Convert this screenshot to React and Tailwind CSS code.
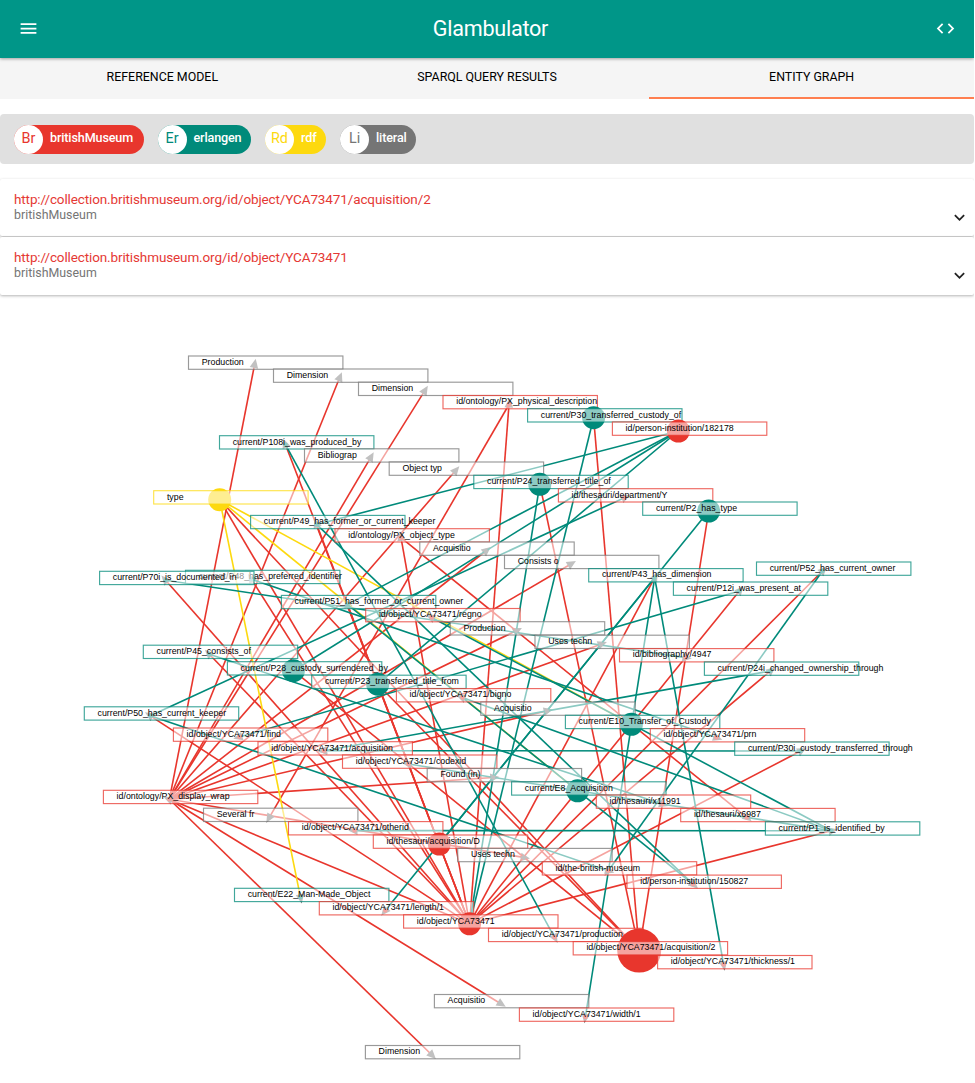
import React, { useState } from 'react';
import { MdMenu, MdCode, MdExpandMore } from 'react-icons/md';

const COLORS = {
  britishMuseum: '#e8362d',
  erlangen: '#008a7a',
  rdf: '#fdd90f',
  literal: '#777777',
};

const TABS = ['Reference model', 'SPARQL query results', 'Entity graph'];

const CHIPS = [
  { short: 'Br', label: 'britishMuseum', bg: 'bg-[#e8362d]', text: 'text-[#e8362d]', width: 'w-[129.5px]' },
  { short: 'Er', label: 'erlangen', bg: 'bg-[#008a7a]', text: 'text-[#008a7a]', width: 'w-[93.5px]' },
  { short: 'Rd', label: 'rdf', bg: 'bg-[#fdd90f]', text: 'text-[#fdd90f]', width: 'w-[61px]' },
  { short: 'Li', label: 'literal', bg: 'bg-[#757575]', text: 'text-[#757575]', width: 'w-[76px]' },
];

const ENTITIES = [
  { uri: 'http://collection.britishmuseum.org/id/object/YCA73471/acquisition/2', prefix: 'britishMuseum', height: 'h-[57px]' },
  { uri: 'http://collection.britishmuseum.org/id/object/YCA73471', prefix: 'britishMuseum', height: 'h-[58px]' },
];

const B = 'britishMuseum';
const E = 'erlangen';
const R = 'rdf';
const L = 'literal';

// [id, label, group, x, y, radius]: x and y are the corner of the label box
const NODES = [
  ['lProd1', 'Production', L, 188.5, 356],
  ['lDim1', 'Dimension', L, 273.5, 369],
  ['lDim2', 'Dimension', L, 358.5, 382.2],
  ['physDesc', 'id/ontology/PX_physical_description', B, 443, 395.5],
  ['p30', 'current/P30_transferred_custody_of', E, 527.6, 408.7, 11.5],
  ['inst182178', 'id/person-institution/182178', B, 612.4, 422, 11.5],
  ['p108i', 'current/P108i_was_produced_by', E, 219.5, 435.7],
  ['lBib', 'Bibliograp', L, 304.5, 448.8],
  ['lObj', 'Object typ', L, 389.2, 462],
  ['p24', 'current/P24_transferred_title_of', E, 473.8, 475.3, 11.5],
  ['dept', 'id/thesauri/department/Y', B, 558.4, 488.7],
  ['p2', 'current/P2_has_type', E, 642.7, 502, 11.5],
  ['type', 'type', R, 153.7, 490.7, 11.5],
  ['p49', 'current/P49_has_former_or_current_keeper', E, 250.6, 515.4],
  ['objType', 'id/ontology/PX_object_type', B, 335, 528.7],
  ['lAcq1', 'Acquisitio', L, 419.8, 542],
  ['lCons', 'Consists o', L, 504.5, 555.3],
  ['p43', 'current/P43_has_dimension', E, 588.7, 568.6],
  ['p12i', 'current/P12i_was_present_at', E, 673.4, 582],
  ['p48', 'current/P48_has_preferred_identifier', E, 185.5, 570.3],
  ['p70i', 'current/P70i_is_documented_in', E, 99.6, 571.3],
  ['p52', 'current/P52_has_current_owner', E, 756.5, 562],
  ['p51', 'current/P51_has_former_or_current_owner', E, 281.4, 595.4],
  ['regno', 'id/object/YCA73471/regno', B, 365.7, 608.5],
  ['lProd2', 'Production', L, 450.3, 621.7],
  ['lUses1', 'Uses techn', L, 535, 635.2],
  ['bib4947', 'id/bibliography/4947', B, 619.5, 648.6],
  ['p24i', 'current/P24i_changed_ownership_through', E, 704.4, 662],
  ['p45', 'current/P45_consists_of', E, 143.3, 645.2],
  ['p28', 'current/P28_custody_surrendered_by', E, 227.4, 661.7, 11.5],
  ['p23', 'current/P23_transferred_title_from', E, 311.7, 675.2, 11.5],
  ['bigno', 'id/object/YCA73471/bigno', B, 396.4, 688.6],
  ['lAcq2', 'Acquisitio', L, 480.8, 702],
  ['e10', 'current/E10_Transfer_of_Custody', E, 565.4, 715.3, 11.5],
  ['prn', 'id/object/YCA73471/prn', B, 650.3, 728.6],
  ['p30i', 'current/P30i_custody_transferred_through', E, 734.7, 742],
  ['p50', 'current/P50_has_current_keeper', E, 84.3, 706.8],
  ['find', 'id/object/YCA73471/find', B, 173.4, 728],
  ['acquisition', 'id/object/YCA73471/acquisition', B, 258, 741.7],
  ['codexid', 'id/object/YCA73471/codexid', B, 342.5, 755],
  ['lFound', 'Found (in)', L, 427.2, 768.5],
  ['e8', 'current/E8_Acquisition', E, 511.6, 781.8, 11.5],
  ['x11991', 'id/thesauri/x11991', B, 596.3, 795],
  ['x6987', 'id/thesauri/x6987', B, 680.7, 808.4],
  ['p1', 'current/P1_is_identified_by', E, 765.4, 821.8],
  ['wrap', 'id/ontology/PX_display_wrap', B, 103.4, 790.3],
  ['lSeveral', 'Several fr', L, 203.5, 808.2],
  ['otherid', 'id/object/YCA73471/otherid', B, 288.5, 821.6],
  ['acqD', 'id/thesauri/acquisition/D', B, 373.3, 835, 11.5],
  ['lUses2', 'Uses techn', L, 457.7, 848.4],
  ['museum', 'id/the-british-museum', B, 542.3, 861.7],
  ['inst150827', 'id/person-institution/150827', B, 627, 875.1],
  ['e22', 'current/E22_Man-Made_Object', E, 234.5, 888.3],
  ['length', 'id/object/YCA73471/length/1', B, 319.3, 901.6],
  ['object', 'id/object/YCA73471', B, 403.6, 914.8, 11.5],
  ['production', 'id/object/YCA73471/production', B, 488.5, 928.3],
  ['acq2', 'id/object/YCA73471/acquisition/2', B, 573.2, 941.6, 22],
  ['thickness', 'id/object/YCA73471/thickness/1', B, 657.6, 955.5],
  ['lAcq3', 'Acquisitio', L, 434.4, 994.5],
  ['width', 'id/object/YCA73471/width/1', B, 519.4, 1008],
  ['lDim3', 'Dimension', L, 365.4, 1045.5],
].map(([id, label, group, x, y, r]) => ({ id, label, group, x, y, r, cx: x + 66, cy: y + 9 }));

// source -> targets, drawn in the colour of the group
const LINKS = [
  ['wrap', B, ['lProd1', 'lDim1', 'lDim2', 'lBib', 'lObj', 'lAcq1', 'lCons', 'lProd2', 'lUses1', 'lAcq2', 'lFound', 'lUses2', 'lAcq3', 'lDim3']],
  ['object', B, ['physDesc', 'p108i', 'p49', 'objType', 'p43', 'p12i', 'p48', 'p70i', 'p52', 'p51', 'p24i', 'p45', 'p30i', 'p50', 'p1', 'wrap', 'type']],
  ['acq2', B, ['type', 'p30', 'p24', 'p2', 'p28', 'p23']],
  ['physDesc', B, ['lSeveral']],
  ['objType', B, ['x6987']],
  ['type', R, ['e22', 'e8', 'e10']],
  ['p108i', E, ['production']],
  ['p30', E, ['object']],
  ['p24', E, ['object']],
  ['p2', E, ['acqD']],
  ['p49', E, ['inst182178', 'inst150827']],
  ['p51', E, ['inst182178', 'inst150827']],
  ['p28', E, ['inst182178']],
  ['p23', E, ['inst182178']],
  ['p43', E, ['length', 'width', 'thickness']],
  ['p12i', E, ['find']],
  ['p48', E, ['prn']],
  ['p70i', E, ['bib4947']],
  ['p52', E, ['museum']],
  ['p50', E, ['museum', 'dept']],
  ['p45', E, ['x11991']],
  ['p24i', E, ['acquisition']],
  ['p30i', E, ['acquisition']],
  ['p1', E, ['regno', 'bigno', 'codexid', 'otherid']],
].flatMap(([source, group, targets]) => targets.map((target) => ({ source, target, group })));

const nodeById = Object.fromEntries(NODES.map((n) => [n.id, n]));

function Link({ source, target, group }) {
  const s = nodeById[source];
  const t = nodeById[target];
  const angle = (Math.atan2(t.cy - s.cy, t.cx - s.cx) * 180) / Math.PI;

  return (
    <g>
      <line x1={s.cx} y1={s.cy} x2={t.cx} y2={t.cy} stroke={COLORS[group]} strokeWidth="1.6" />
      {!t.r && (
        <path d="M-3 -4.3L6.3 0L-3 4.3Z" fill="#777" transform={`translate(${t.cx} ${t.cy}) rotate(${angle})`} />
      )}
    </g>
  );
}

function Node({ node }) {
  const color = COLORS[node.group];
  return (
    <g>
      <circle cx={node.cx} cy={node.cy} r={node.r || 2.2} fill={color} />
      <rect x={node.x} y={node.y} width="154.4" height="13.3" fill="#fff" fillOpacity="0.55" stroke={color} strokeOpacity="0.75" strokeWidth="1.15" />
      <text x={node.x + 13.2} y={node.y + 8.8} fontSize="8.8" fill="#000">{node.label}</text>
    </g>
  );
}

function EntityGraph() {
  return (
    <svg width="974" height="788" viewBox="0 295 974 788" className="block font-['Liberation_Sans',Arial,sans-serif]">
      {LINKS.map((link) => (
        <Link key={`${link.source}-${link.target}`} {...link} />
      ))}
      {NODES.map((node) => (
        <Node key={node.id} node={node} />
      ))}
    </svg>
  );
}

export default function App() {
  const [activeTab, setActiveTab] = useState(2);

  return (
    <div className="w-[974px] h-[1083px] overflow-hidden bg-white font-['Roboto',sans-serif] text-black">
      {/* Toolbar */}
      <header className="relative z-10 flex h-[57.5px] items-center justify-between bg-[#009688] px-[18px] text-white shadow-[0_1px_3px_rgba(0,0,0,0.35)]">
        <button><MdMenu size={21} /></button>
        <h1 className="pl-[7px] text-[21.6px] leading-none tracking-[-0.26px]">Glambulator</h1>
        <button><MdCode size={21} /></button>
      </header>

      {/* Tabs */}
      <nav className="grid h-[41.5px] grid-cols-3 bg-[#f5f5f5]">
        {TABS.map((tab, i) => (
          <button
            key={tab}
            onClick={() => setActiveTab(i)}
            className={`border-b-2 pt-px text-[12.4px] uppercase ${i === activeTab ? 'border-[#ff7f50]' : 'border-transparent'}`}
          >
            {tab}
          </button>
        ))}
      </nav>

      {/* Legend */}
      <div className="mt-[15px] flex h-[50px] items-center gap-[14px] rounded bg-[#e0e0e0] pl-[14px]">
        {CHIPS.map((chip) => (
          <div key={chip.label} className={`flex h-[29px] items-center rounded-full text-white ${chip.bg} ${chip.width}`}>
            <span className={`flex size-[29px] shrink-0 items-center justify-center rounded-full bg-white text-[14.4px] ${chip.text}`}>
              {chip.short}
            </span>
            <span className="ml-[7px] pb-px text-[12.6px] font-medium tracking-[-0.14px]">{chip.label}</span>
          </div>
        ))}
      </div>

      {/* Entities */}
      <div className="mt-[15px] flex flex-col gap-px">
        {ENTITIES.map((entity) => (
          <div key={entity.uri} className={`flex justify-between rounded-xs bg-white pl-[14px] pr-1 shadow-[0_1px_3px_rgba(0,0,0,0.3)] ${entity.height}`}>
            <div className="pt-[13px]">
              <p className="text-[13.5px] leading-[15px] tracking-[-0.125px] text-[#e53935]">{entity.uri}</p>
              <p className="text-[12.4px] leading-[15px] text-[#757575]">{entity.prefix}</p>
            </div>
            <MdExpandMore size={21} className="mt-7 text-[#212121]" />
          </div>
        ))}
      </div>

      <EntityGraph />
    </div>
  );
}
